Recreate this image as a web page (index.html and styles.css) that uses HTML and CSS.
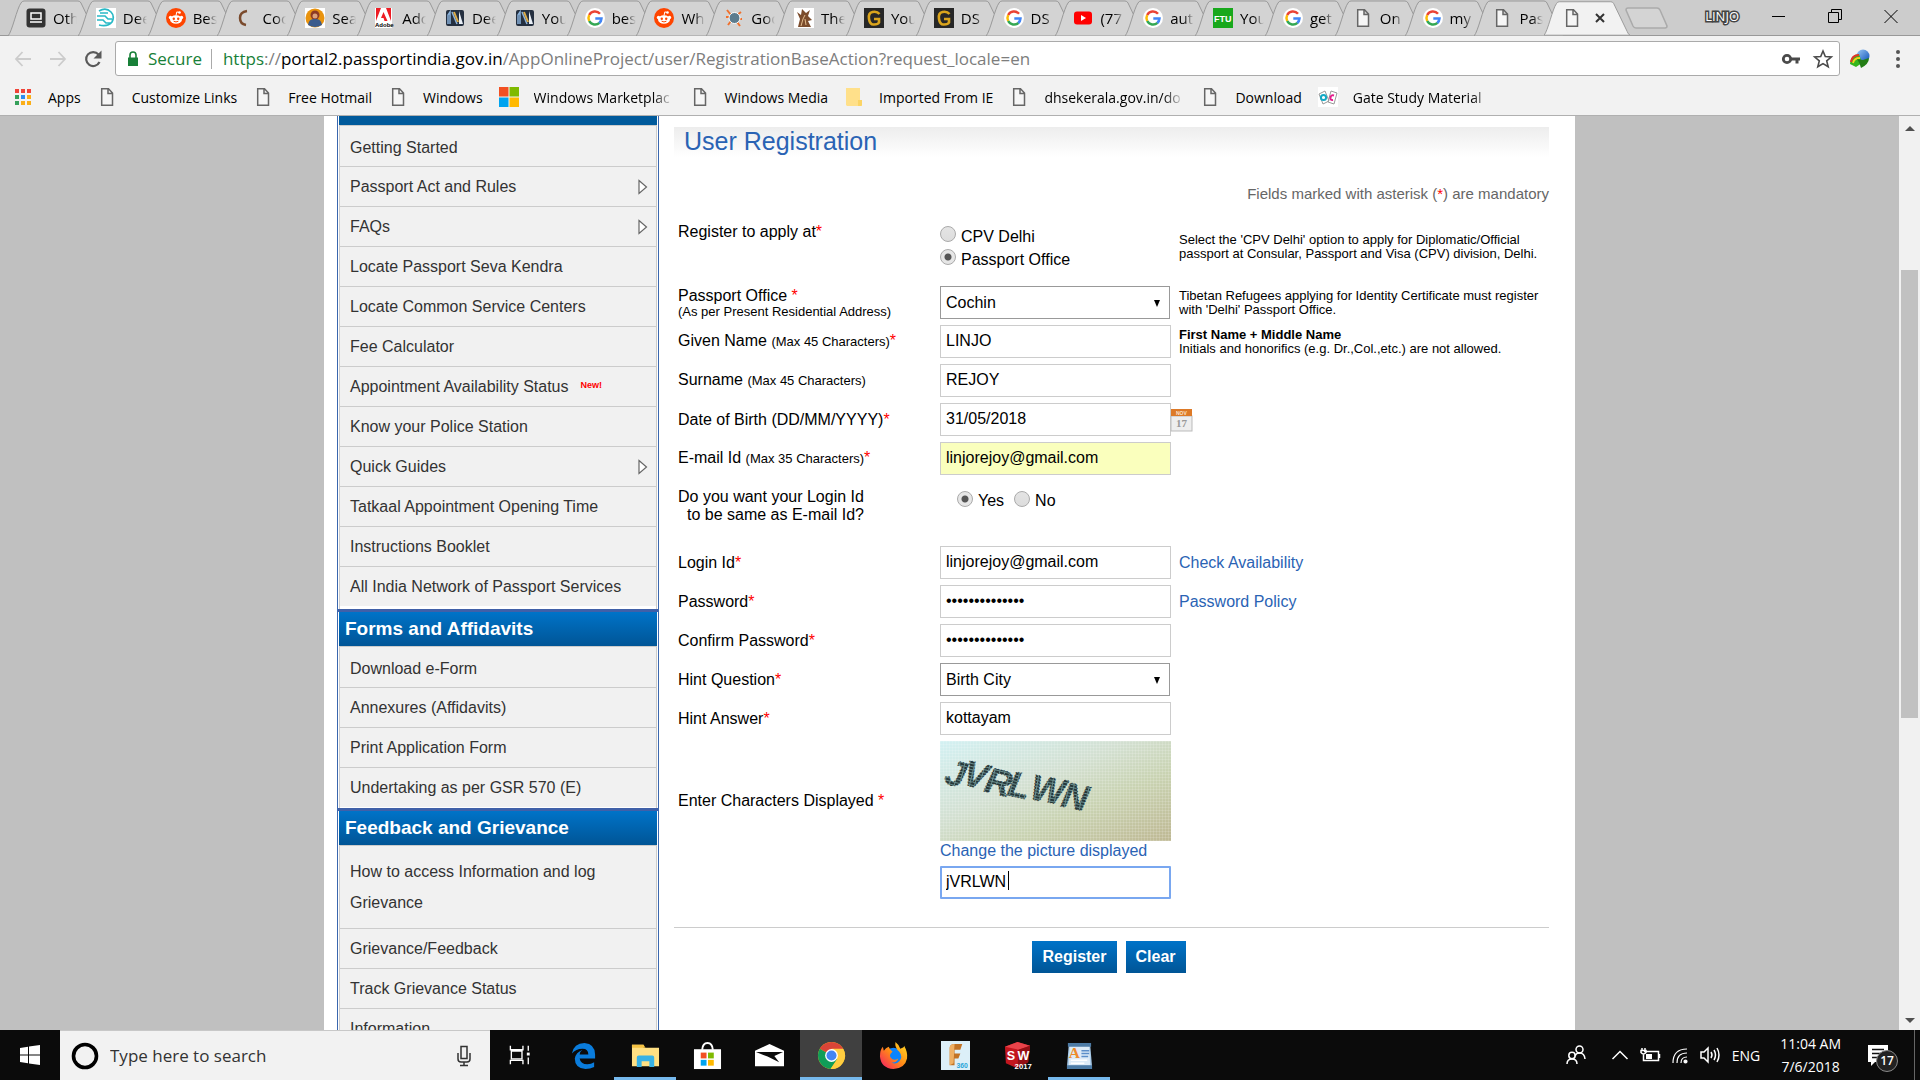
FILE: index.html
```html
<!DOCTYPE html>
<html lang="en">
<head>
<meta charset="utf-8">
<title>User Registration</title>
<link rel="stylesheet" href="styles.css">
</head>
<body>
<svg class="defs" aria-hidden="true">
  <defs>
    <linearGradient id="blueglow" x1="0" y1="0" x2="1" y2="1"><stop offset="0" stop-color="#9cc9f5"/><stop offset="1" stop-color="#0b4fb8"/></linearGradient>
    <linearGradient id="fire" x1="1" y1="0" x2="0" y2="1"><stop offset="0" stop-color="#ffe226"/><stop offset=".5" stop-color="#ff8a16"/><stop offset="1" stop-color="#f5156c"/></linearGradient>
    <linearGradient id="paper" x1="0" y1="0" x2="1" y2="1"><stop offset="0" stop-color="#d3f1f3"/><stop offset=".4" stop-color="#d3e0d2"/><stop offset=".65" stop-color="#c9d3b2"/><stop offset="1" stop-color="#beb893"/></linearGradient>
    <pattern id="weave" width="3" height="3" patternUnits="userSpaceOnUse"><path d="M0 0h3M0 0v3" stroke="#fff" stroke-opacity=".28" fill="none"/></pattern>
    <pattern id="hatch" width="5" height="3" patternUnits="userSpaceOnUse"><rect width="5" height="3" fill="#6a8f8f"/><path d="M0 1h4" stroke="#152022" stroke-width="1.6"/></pattern>
    <symbol id="tab" viewBox="0 0 90 36"><path d="M0 36C4 32 9 8 13 3Q14 1 16 1H70Q72 1 73 3L87 32Q88 35 90 36Z"/></symbol>
    <symbol id="google" viewBox="0 0 20 20"><circle cx="10" cy="10" r="10" fill="#fff"/><path d="M15 5.8A6.6 6.6 0 0 0 4.2 7" fill="none" stroke="#ea4335" stroke-width="2.5"/><path d="M4.2 7a6.6 6.6 0 0 0 0 6" fill="none" stroke="#fbbc05" stroke-width="2.5"/><path d="M4.2 13a6.6 6.6 0 0 0 10.3 1.8" fill="none" stroke="#34a853" stroke-width="2.5"/><path d="M14.3 15a6.600 6.600 0 0 0 2.200-4.600H10.300" fill="none" stroke="#4285f4" stroke-width="2.500"/></symbol>
    <symbol id="reddit" viewBox="0 0 20 20"><circle cx="10" cy="10" r="10" fill="#ff4500"/><ellipse cx="10" cy="11.500" rx="6" ry="4.300" fill="#fff"/><circle cx="4.500" cy="9.500" r="1.700" fill="#fff"/><circle cx="15.500" cy="9.500" r="1.700" fill="#fff"/><circle cx="13.500" cy="4.500" r="1.300" fill="#fff"/><path d="M10 7.500l.8-3.600 2.500.6M7.600 13.500q2.400 1.500 4.800 0" fill="none" stroke="#fff"/><circle cx="7.800" cy="10.800" r="1.200" fill="#ff4500"/><circle cx="12.200" cy="10.800" r="1.200" fill="#ff4500"/><path d="M7.600 13.200q2.400 1.500 4.800 0" fill="none" stroke="#ff4500"/></symbol>
    <symbol id="page" viewBox="0 0 20 20"><path d="M4.700 1.800h6.800l4 4.200v12.200H4.700zM11 2v4.500h4.500" fill="#f6f6f6" stroke="#666" stroke-width="1.500"/></symbol>
    <symbol id="laptop" viewBox="0 0 20 20"><rect x=".5" y=".5" width="19" height="19" rx="3" fill="#333"/><path d="M5 5h10v6H5zM4 14h12" fill="none" stroke="#fff" stroke-width="1.500"/></symbol>
    <symbol id="circuit" viewBox="0 0 20 20"><rect width="20" height="20" fill="#fff"/><path d="M3 3q7-4 12 1 4 4 1 10-4 5-13 3M1 8h8l3 3h4M1 12h6l3 3h5M4 5h8" fill="none" stroke="#28b9c6" stroke-width="1.700"/></symbol>
    <symbol id="arc" viewBox="0 0 20 20"><path d="M12 3Q5 4 5 10t6 7" fill="none" stroke="#7a4a2c" stroke-width="2.500"/></symbol>
    <symbol id="person" viewBox="0 0 20 20"><rect width="20" height="20" fill="#fff"/><circle cx="10" cy="10" r="9.500" fill="#e9930d"/><circle cx="10" cy="7" r="4.500" fill="#8d3a24"/><path d="M3 17q1-7 7-6 6-1 7 6-7 4-14 0z" fill="#3b5b8c"/><circle cx="10" cy="8" r="2.500" fill="#dca27c"/></symbol>
    <symbol id="adobe" viewBox="0 0 20 20"><rect width="17" height="20" fill="#fff"/><path d="M1 0h5L1 13zM11 0h5v13zM8.500 4l4 9h-3l-1-3H6z" fill="#ed1c24"/><text x="0" y="19" class="t-adobe">Adobe</text></symbol>
    <symbol id="blades" viewBox="0 0 20 20"><rect x="1" y="2" width="18" height="16" rx="2" fill="#253040"/><path d="M3 16V7l2-3v12M7 4l5 12" stroke="#8bb2db" stroke-width="1.500" fill="none"/><path d="M9 4l4 10" stroke="#e0ae48" stroke-width="2"/><path d="M14 3v13l4 0z" fill="#e8eef5"/></symbol>
    <symbol id="crab" viewBox="0 0 20 20"><path d="M3 2l4 5M17 4l-4 3M2 9h4M18 11h-4M4 17l3-4M16 18l-3-4" stroke="#f0702c" stroke-width="2"/><circle cx="10.500" cy="10" r="5.500" fill="#5c7c8e" stroke="#fff"/></symbol>
    <symbol id="statue" viewBox="0 0 20 20"><rect width="20" height="20" fill="#fff"/><path d="M4 19l2-8-3-7 4 3 1-6 4 4 4-3-2 6 4 4-4 1 3 6z" fill="#7b4c2c"/><path d="M7 18l2-7 2-4M12 17l-1-6" stroke="#e3bd8d" fill="none"/></symbol>
    <symbol id="goldg" viewBox="0 0 20 20"><rect width="20" height="20" fill="#272727"/><path d="M15.500 6Q13 3 8.500 4T5 11t5 5.500q4 0 5-2V11h-5" fill="none" stroke="#dba51c" stroke-width="2.600"/></symbol>
    <symbol id="youtube" viewBox="0 0 20 20"><rect x="1" y="3.500" width="18" height="13" rx="3" fill="#f00"/><path d="M8 7l5 3-5 3z" fill="#fff"/></symbol>
    <symbol id="ftu" viewBox="0 0 20 20"><rect width="20" height="20" fill="#18a81c"/><text x="1" y="14" class="t-ftu">FTU</text></symbol>
    <symbol id="winlogo" viewBox="0 0 20 20"><path d="M0 0h9.500v9.500H0z" fill="#f25022"/><path d="M10.500 0H20v9.500h-9.500z" fill="#7fba00"/><path d="M0 10.500h9.500V20H0z" fill="#00a4ef"/><path d="M10.500 10.500H20V20h-9.500z" fill="#ffb900"/></symbol>
    <symbol id="folder" viewBox="0 0 20 20"><path d="M2 1h14v12l2 1v5H3l-1-1z" fill="#ffe08a"/><path d="M14 13h4v5l-1 1h-3z" fill="#fbd465"/></symbol>
    <symbol id="apps" viewBox="0 0 20 20"><path d="M2 2h4v4H2zM8 2h4v4H8zM14 2h4v4h-4z" fill="#f04438"/><path d="M2 8h4v4H2zM2 14h4v4H2z" fill="#35a05a"/><path d="M8 8h4v4H8z" fill="#2d8cf0"/><path d="M14 8h4v4h-4zM8 14h4v4H8zM14 14h4v4h-4z" fill="#fbae17"/></symbol>
    <symbol id="gate" viewBox="0 0 20 20"><rect width="20" height="20" fill="#fff"/><path d="M1 7l6-3 4 10-6 3zM13 4l6 2-3 11-6-2z" fill="#fff" stroke="#999"/><circle cx="5.500" cy="10.500" r="2.600" fill="none" stroke="#15a9c4" stroke-width="2"/><path d="M16 8.500q-3-1-3.500 2t2.500 2.500" fill="none" stroke="#e41b8b" stroke-width="2"/></symbol>
    <symbol id="tri" viewBox="0 0 10 16"><path d="M1 1.500l7.500 6.500L1 14.500z" fill="#fff" stroke="#666" stroke-width="1.200"/></symbol>
  </defs>
</svg>

<header class="browser">
  <div class="strip">
    <div class="tabs" role="tablist">
      <button class="tab" role="tab"><svg class="shape"><use href="#tab"/></svg><svg class="ico"><use href="#laptop"/></svg><span>Oth</span></button>
      <button class="tab" role="tab"><svg class="shape"><use href="#tab"/></svg><svg class="ico"><use href="#circuit"/></svg><span>Dee</span></button>
      <button class="tab" role="tab"><svg class="shape"><use href="#tab"/></svg><svg class="ico"><use href="#reddit"/></svg><span>Bes</span></button>
      <button class="tab" role="tab"><svg class="shape"><use href="#tab"/></svg><svg class="ico"><use href="#arc"/></svg><span>Coc</span></button>
      <button class="tab" role="tab"><svg class="shape"><use href="#tab"/></svg><svg class="ico"><use href="#person"/></svg><span>Sea</span></button>
      <button class="tab" role="tab"><svg class="shape"><use href="#tab"/></svg><svg class="ico"><use href="#adobe"/></svg><span>Adc</span></button>
      <button class="tab" role="tab"><svg class="shape"><use href="#tab"/></svg><svg class="ico"><use href="#blades"/></svg><span>Dee</span></button>
      <button class="tab" role="tab"><svg class="shape"><use href="#tab"/></svg><svg class="ico"><use href="#blades"/></svg><span>You</span></button>
      <button class="tab" role="tab"><svg class="shape"><use href="#tab"/></svg><svg class="ico"><use href="#google"/></svg><span>bes</span></button>
      <button class="tab" role="tab"><svg class="shape"><use href="#tab"/></svg><svg class="ico"><use href="#reddit"/></svg><span>Wh</span></button>
      <button class="tab" role="tab"><svg class="shape"><use href="#tab"/></svg><svg class="ico"><use href="#crab"/></svg><span>Goo</span></button>
      <button class="tab" role="tab"><svg class="shape"><use href="#tab"/></svg><svg class="ico"><use href="#statue"/></svg><span>The</span></button>
      <button class="tab" role="tab"><svg class="shape"><use href="#tab"/></svg><svg class="ico"><use href="#goldg"/></svg><span>You</span></button>
      <button class="tab" role="tab"><svg class="shape"><use href="#tab"/></svg><svg class="ico"><use href="#goldg"/></svg><span>DS</span></button>
      <button class="tab" role="tab"><svg class="shape"><use href="#tab"/></svg><svg class="ico"><use href="#google"/></svg><span>DS</span></button>
      <button class="tab" role="tab"><svg class="shape"><use href="#tab"/></svg><svg class="ico"><use href="#youtube"/></svg><span>(77</span></button>
      <button class="tab" role="tab"><svg class="shape"><use href="#tab"/></svg><svg class="ico"><use href="#google"/></svg><span>aut</span></button>
      <button class="tab" role="tab"><svg class="shape"><use href="#tab"/></svg><svg class="ico"><use href="#ftu"/></svg><span>You</span></button>
      <button class="tab" role="tab"><svg class="shape"><use href="#tab"/></svg><svg class="ico"><use href="#google"/></svg><span>get</span></button>
      <button class="tab" role="tab"><svg class="shape"><use href="#tab"/></svg><svg class="ico"><use href="#page"/></svg><span>On</span></button>
      <button class="tab" role="tab"><svg class="shape"><use href="#tab"/></svg><svg class="ico"><use href="#google"/></svg><span>my</span></button>
      <button class="tab" role="tab"><svg class="shape"><use href="#tab"/></svg><svg class="ico"><use href="#page"/></svg><span>Pas</span></button>
      <button class="tab active" role="tab" aria-selected="true" aria-label="Current tab"><svg class="shape"><use href="#tab"/></svg><svg class="ico"><use href="#page"/></svg><svg class="close" viewBox="0 0 12 12"><path d="M2 2l8 8M10 2l-8 8" stroke="#333" stroke-width="2"/></svg></button>
    </div>
    <button class="newtab" aria-label="New tab"><svg viewBox="0 0 44 22"><path d="M3 1h29q2 0 3 2l7 16q0 2-2 2H11q-2 0-3-2L1 3q0-2 2-2z" fill="#d4d4d4" stroke="#aaa" stroke-width="1.500"/></svg></button>
    <div class="win">
      <span class="user">LINJO</span>
      <button aria-label="Minimise"><svg viewBox="0 0 16 16"><path d="M1 8.500h13" stroke="#000"/></svg></button>
      <button aria-label="Restore"><svg viewBox="0 0 16 16"><path d="M1.500 4.500h10v10h-10zM4.500 4.500v-3h10v10h-3" fill="none" stroke="#000"/></svg></button>
      <button aria-label="Close"><svg viewBox="0 0 16 16"><path d="M1.500 2l13 13M14.500 2l-13 13" stroke="#000"/></svg></button>
    </div>
  </div>
  <div class="toolbar">
    <button class="nav" aria-label="Back"><svg viewBox="0 0 20 20"><path d="M18 10H3M9.500 3L3 10l6.500 7" fill="none" stroke="#ccc" stroke-width="1.800"/></svg></button>
    <button class="nav" aria-label="Forward"><svg viewBox="0 0 20 20"><path d="M2 10h15M10.500 3l6.500 7-6.500 7" fill="none" stroke="#ccc" stroke-width="1.800"/></svg></button>
    <button class="nav" aria-label="Reload"><svg viewBox="0 0 20 20"><path d="M16.500 13A7 7 0 1 1 15.500 5.500" fill="none" stroke="#5a5a5a" stroke-width="2.200"/><path d="M18.500 1.500v8h-8z" fill="#5a5a5a"/></svg></button>
    <div class="omnibox">
      <svg class="lock" viewBox="0 0 12 16"><path d="M1 6.500h10V15H1z" fill="#188038"/><path d="M3 7V4a3 3 0 0 1 6 0v3" fill="none" stroke="#188038" stroke-width="1.600"/></svg>
      <span class="secure">Secure</span>
      <span class="url"><i>https</i>://<b>portal2.passportindia.gov.in</b>/AppOnlineProject/user/RegistrationBaseAction?request_locale=en</span>
      <svg class="key" viewBox="0 0 20 20"><circle cx="6" cy="10" r="3.700" fill="none" stroke="#4a4a4a" stroke-width="2.800"/><path d="M9 8.500h10v3h-1.500v3h-3v-3H9z" fill="#4a4a4a"/></svg>
      <svg class="key" viewBox="0 0 20 20"><path d="M10 2l2.300 5.600 6 .4-4.600 3.900 1.500 5.900L10 14.600l-5.200 3.200 1.500-5.900L1.700 8l6-.4z" fill="none" stroke="#4a4a4a" stroke-width="1.600"/></svg>
    </div>
    <svg class="ext" viewBox="0 0 20 20"><circle cx="13" cy="7" r="6.500" fill="url(#blueglow)"/><path d="M0 15Q0 6 9 5l3 9-6 4z" fill="#35b51d"/><path d="M1 13q1-7 8-7" stroke="#e2342b" stroke-width="2" fill="none"/><path d="M3 14q1-5 7-5" stroke="#f4d21c" stroke-width="1.800" fill="none"/><path d="M7 10l6 1 6-2q0 6-8 10-1-5-4-9z" fill="#237d15"/></svg>
    <svg class="dots" viewBox="0 0 20 20"><circle cx="10" cy="3" r="2" fill="#555"/><circle cx="10" cy="10" r="2" fill="#555"/><circle cx="10" cy="17" r="2" fill="#555"/></svg>
  </div>
  <nav class="bookmarks">
    <a href="#"><svg class="ico"><use href="#apps"/></svg><span>Apps</span></a>
    <a href="#"><svg class="ico"><use href="#page"/></svg><span>Customize Links</span></a>
    <a href="#"><svg class="ico"><use href="#page"/></svg><span>Free Hotmail</span></a>
    <a href="#"><svg class="ico"><use href="#page"/></svg><span>Windows</span></a>
    <a href="#"><svg class="ico"><use href="#winlogo"/></svg><span class="fade">Windows Marketplac</span></a>
    <a href="#"><svg class="ico"><use href="#page"/></svg><span>Windows Media</span></a>
    <a href="#"><svg class="ico"><use href="#folder"/></svg><span>Imported From IE</span></a>
    <a href="#"><svg class="ico"><use href="#page"/></svg><span class="fade">dhsekerala.gov.in/do</span></a>
    <a href="#"><svg class="ico"><use href="#page"/></svg><span>Download</span></a>
    <a href="#"><svg class="ico"><use href="#gate"/></svg><span class="fade">Gate Study Material</span></a>
  </nav>
</header>

<div class="viewport">
  <div class="scroller">
    <div class="sheet">
      <aside class="side">
        <section>
          <div class="sidehead cut"></div>
          <ul>
            <li><a href="#">Getting Started</a></li>
            <li><a href="#">Passport Act and Rules<svg class="tri"><use href="#tri"/></svg></a></li>
            <li><a href="#">FAQs<svg class="tri"><use href="#tri"/></svg></a></li>
            <li><a href="#">Locate Passport Seva Kendra</a></li>
            <li><a href="#">Locate Common Service Centers</a></li>
            <li><a href="#">Fee Calculator</a></li>
            <li><a href="#">Appointment Availability Status <sup>New!</sup></a></li>
            <li><a href="#">Know your Police Station</a></li>
            <li><a href="#">Quick Guides<svg class="tri"><use href="#tri"/></svg></a></li>
            <li><a href="#">Tatkaal Appointment Opening Time</a></li>
            <li><a href="#">Instructions Booklet</a></li>
            <li><a href="#">All India Network of Passport Services</a></li>
          </ul>
        </section>
        <section>
          <h2 class="sidehead">Forms and Affidavits</h2>
          <ul>
            <li><a href="#">Download e-Form</a></li>
            <li><a href="#">Annexures (Affidavits)</a></li>
            <li><a href="#">Print Application Form</a></li>
            <li><a href="#">Undertaking as per GSR 570 (E)</a></li>
          </ul>
        </section>
        <section>
          <h2 class="sidehead">Feedback and Grievance</h2>
          <ul>
            <li class="tall"><a href="#">How to access Information and log Grievance</a></li>
            <li><a href="#">Grievance/Feedback</a></li>
            <li><a href="#">Track Grievance Status</a></li>
            <li><a href="#">Information</a></li>
          </ul>
        </section>
      </aside>
      <main class="main">
        <h1>User Registration</h1>
        <p class="mandatory">Fields marked with asterisk (<em>*</em>) are mandatory</p>
        <form>
          <div class="row apply" role="radiogroup" aria-labelledby="apply-label">
            <div class="label" id="apply-label">Register to apply at<em>*</em></div>
            <div class="radios stack">
              <label><input type="radio" name="apply">CPV Delhi</label>
              <label><input type="radio" name="apply" checked>Passport Office</label>
            </div>
            <p class="help">Select the 'CPV Delhi' option to apply for Diplomatic/Official<br>passport at Consular, Passport and Visa (CPV) division, Delhi.</p>
          </div>
          <div class="row">
            <label for="office">Passport Office <em>*</em><small class="under">(As per Present Residential Address)</small></label>
            <select id="office"><option>Cochin</option></select>
            <p class="help">Tibetan Refugees applying for Identity Certificate must register<br>with 'Delhi' Passport Office.</p>
          </div>
          <div class="row">
            <label for="given">Given Name <small>(Max 45 Characters)</small><em>*</em></label>
            <input id="given" type="text" value="LINJO">
            <p class="help"><strong>First Name + Middle Name</strong><br>Initials and honorifics (e.g. Dr.,Col.,etc.) are not allowed.</p>
          </div>
          <div class="row">
            <label for="surname">Surname <small>(Max 45 Characters)</small></label>
            <input id="surname" type="text" value="REJOY">
          </div>
          <div class="row">
            <label for="dob">Date of Birth (DD/MM/YYYY)<em>*</em></label>
            <input id="dob" type="text" value="31/05/2018">
            <button type="button" class="cal" aria-label="Choose date"><svg viewBox="0 0 21 23"><rect y="7" width="21" height="15" fill="#eee" stroke="#bbb"/><rect width="21" height="7" fill="#dd7a28"/><text x="5" y="6" class="t-nov">NOV</text><text x="5" y="18" class="t-day">17</text></svg></button>
          </div>
          <div class="row">
            <label for="email">E-mail Id <small>(Max 35 Characters)</small><em>*</em></label>
            <input id="email" class="filled" type="text" value="linjorejoy@gmail.com">
          </div>
          <div class="row same" role="radiogroup" aria-labelledby="same-label">
            <div class="label" id="same-label">Do you want your Login Id<br><span class="indent">to be same as E-mail Id?</span></div>
            <div class="radios inline">
              <label><input type="radio" name="same" checked>Yes</label>
              <label><input type="radio" name="same">No</label>
            </div>
          </div>
          <div class="row">
            <label for="login">Login Id<em>*</em></label>
            <input id="login" type="text" value="linjorejoy@gmail.com">
            <a class="link" href="#">Check Availability</a>
          </div>
          <div class="row">
            <label for="pass">Password<em>*</em></label>
            <input id="pass" type="password" value="aaaaaaaaaaaaaa">
            <a class="link" href="#">Password Policy</a>
          </div>
          <div class="row">
            <label for="pass2">Confirm Password<em>*</em></label>
            <input id="pass2" type="password" value="aaaaaaaaaaaaaa">
          </div>
          <div class="row">
            <label for="hint">Hint Question<em>*</em></label>
            <select id="hint"><option>Birth City</option></select>
          </div>
          <div class="row">
            <label for="answer">Hint Answer<em>*</em></label>
            <input id="answer" type="text" value="kottayam">
          </div>
          <div class="row captcha">
            <label for="code">Enter Characters Displayed <em>*</em></label>
            <div class="code">
              <svg class="picture" viewBox="0 0 231 100" role="img" aria-label="Captcha">
                <rect width="231" height="100" fill="url(#paper)"/>
                <rect width="231" height="100" fill="url(#weave)"/>
                <g class="glyphs">
                  <text x="3" y="42" transform="rotate(14 3 42)">J</text>
                  <text x="21" y="43" transform="rotate(14 21 43)">V</text>
                  <text x="43" y="50" transform="rotate(14 43 50)">R</text>
                  <text x="66" y="54" transform="rotate(12 66 54)">L</text>
                  <text x="89" y="58" transform="rotate(10 89 58)">W</text>
                  <text x="120" y="65" transform="rotate(12 120 65)">N</text>
                </g>
              </svg>
              <a class="link" href="#">Change the picture displayed</a>
              <input id="code" class="current" type="text" value="jVRLWN">
              <span class="caret"></span>
            </div>
          </div>
          <div class="actions">
            <button type="button">Register</button>
            <button type="button">Clear</button>
          </div>
        </form>
      </main>
    </div>
  </div>
  <div class="bar"><i class="up"></i><i class="thumb"></i><i class="down"></i></div>
</div>

<footer class="taskbar">
  <button class="start" aria-label="Start"><svg viewBox="0 0 20 20"><path d="M0 3l8-1.200v7.700H0zM9 1.600L20 0v9.500H9zM0 10.500h8v7.700L0 17zM9 10.500h11V20L9 18.400z" fill="#fff"/></svg></button>
  <label class="search">
    <svg class="ring" viewBox="0 0 28 28"><circle cx="14" cy="14" r="11.500" fill="none" stroke="#000" stroke-width="3.600"/></svg>
    <input type="text" placeholder="Type here to search" aria-label="Type here to search">
    <svg class="mic" viewBox="0 0 16 22"><path d="M5 1.500h6v12H5zM2 8v6q0 3 3 3h6q3 0 3-3V8M8 17v4M4 20.500h8" fill="none" stroke="#333" stroke-width="1.500"/></svg>
  </label>
  <div class="apps">
    <button aria-label="Task view"><svg viewBox="0 0 30 30"><path d="M3.500 5v4h13V5M3.500 24v-4h13v4M4.500 10.500h11v8h-11zM22 5v5M22 17v7" fill="none" stroke="#fff" stroke-width="1.400"/><path d="M20.500 12h3v3h-3z" fill="#fff"/></svg></button>
    <button aria-label="Edge"><svg viewBox="0 0 30 30"><path d="M3 13Q5 2 16 2q11 1 11 12v4H11q1 6 8 6 4 0 7-2v5q-4 2-9 2Q6 28 6 18q1-6 8-9-3 2-3 5h9q0-6-6-6Q7 8 3 13z" fill="#0a7cdc"/></svg></button>
    <button class="run" aria-label="File Explorer"><svg viewBox="0 0 30 30"><path d="M1 4h12v3h16v19H1z" fill="#ffe083"/><path d="M1 4h12l2 3H1z" fill="#f5c242"/><path d="M6 27V17q0-2 2-2h14q2 0 2 2v10h-5v-6h-8v6z" fill="#38b2e5"/></svg></button>
    <button aria-label="Store"><svg viewBox="0 0 30 30"><path d="M9.500 9Q10 2 15 2t5.500 7" fill="none" stroke="#fff" stroke-width="2"/><path d="M1 8.500h28V29H1z" fill="#fff"/><path d="M8 12h6v6H8z" fill="#f25022"/><path d="M15.500 12h6v6h-6z" fill="#7fba00"/><path d="M8 19.500h6v6H8z" fill="#00a4ef"/><path d="M15.500 19.500h6v6h-6z" fill="#ffb900"/></svg></button>
    <button aria-label="Mail"><svg viewBox="0 0 30 30"><path d="M0 10L15 3l15 7v16H0z" fill="#fff"/><path d="M1 11.500h28l-9 4 5 6.500-12-6z" fill="#0b0b0b"/></svg></button>
    <button class="run on" aria-label="Chrome"><svg viewBox="0 0 30 30"><circle cx="15" cy="15" r="14" fill="#fbc116"/><path d="M15 15L2.900 8A14 14 0 0 1 27.100 8z" fill="#db4437"/><path d="M15 15L2.900 8A14 14 0 0 0 14 29l7-10.500z" fill="#109d58"/><path d="M14 29a14 14 0 0 0 13.100-21H15l6 10.500z" fill="#ffcd40"/><circle cx="15" cy="15" r="6.600" fill="#fff"/><circle cx="15" cy="15" r="5.200" fill="#4285f4"/></svg></button>
    <button aria-label="Firefox"><svg viewBox="0 0 30 30"><circle cx="15" cy="17" r="10" fill="#0a84ff"/><path d="M17 1q4 3 5 7 4-1 4-3 4 7 3 13-2 10-14 11Q2 28 1 16q0-7 3-10l1 4q2-3 5-4 1 3 4 5-4 3-2 6 3 4 8 1-2 5-7 4 4 3 8-1 4-5 0-10-5-4-4-10z" fill="url(#fire)"/></svg></button>
    <button aria-label="Fusion 360"><svg viewBox="0 0 30 30"><rect width="30" height="30" fill="#dceff8"/><path d="M9 25V7q0-4 5-4h8l-2 6h-6v4h6l-2 5h-4v7z" fill="#c27325"/><path d="M9 7q0-4 5-4l-1 20-4 2z" fill="#efaf63"/><text x="16" y="28" class="t-360">360</text></svg></button>
    <button aria-label="SolidWorks"><svg viewBox="0 0 30 30"><path d="M2 6l13-5 13 4-2 17-12 6L3 23z" fill="#c3161e"/><path d="M2 6l13-5 13 4-12 4z" fill="#e9434a"/><path d="M16 9l12-4-2 17-11 6z" fill="#930e14"/><text x="4" y="20" class="t-sw">S</text><text x="15" y="20" class="t-sw">W</text><text x="12" y="29" class="t-year">2017</text></svg></button>
    <button class="run" aria-label="WordPad"><svg viewBox="0 0 30 30"><path d="M4 3h22l2 24H2z" fill="#a9cbe9"/><path d="M5 5h20l1 20H4z" fill="#ddebf7"/><path d="M3 2h24v4H3zM2 25h26v4H2z" fill="#4d7ba5"/><text x="4" y="18" class="t-a">A</text><path d="M17 10h8M17 13h8M17 16h7" stroke="#5b8ec9" stroke-width="1.500"/><path d="M6 20h17M6 23h14" stroke="#fff" stroke-width="1.500"/></svg></button>
  </div>
  <div class="tray">
    <svg class="w20" viewBox="0 0 20 20"><circle cx="13.500" cy="4.500" r="3.500"/><circle cx="6" cy="10.500" r="3.200"/><path d="M1 19q0-5 5-5t5 5M9 11q1-3 4.500-3 5 0 5.500 6"/></svg>
    <svg class="chev" viewBox="0 0 20 20"><path d="M2.500 14L10 6.500l7.500 7.500"/></svg>
    <svg class="w20" viewBox="0 0 20 20"><path d="M4 6.500h14.500v9H3.500v-5M19.500 9v4M2 3v2M5 3v2M1 5.500h5v2q-2.500 3-5 0zM3.500 9v2"/><path d="M6 9h6v5H6z" fill="#fff" stroke="none"/></svg>
    <svg class="w20 wifi" viewBox="0 0 20 20"><path d="M3 18Q3 4 17 4M7 18Q7 8 17 8M11 18q0-6 6-6"/><circle cx="15.500" cy="16.500" r="1.500" fill="#fff"/></svg>
    <svg class="w20" viewBox="0 0 20 20"><path d="M1 7h3l4-4v14l-4-4H1zM11 7q2 3 0 6M14 5q3 5 0 10M17 3q4 7 0 14"/></svg>
    <span class="lang">ENG</span>
    <time class="clock">11:04 AM<br>7/6/2018</time>
    <span class="note"><svg viewBox="0 0 20 20"><path d="M0 1h20v17H7l-4 4V18H0z" fill="#fff" stroke="none"/><path d="M4 5.500h12M4 9.500h12M4 13.500h8" stroke="#111"/></svg><b>17</b></span>
    <span class="peek"></span>
  </div>
</footer>
</body>
</html>
```
FILE: styles.css
```css
* { box-sizing: border-box; }
html, body { height: 100%; }
body {
  margin: 0;
  display: flex;
  flex-direction: column;
  overflow: hidden;
  font-family: "Liberation Sans", Arial, sans-serif;
  font-size: 16px;
  color: #000;
}
button { font: inherit; border: 0; background: none; padding: 0; margin: 0; }
a { text-decoration: none; color: inherit; }
svg { display: block; flex: none; overflow: visible; }
em { font-style: normal; color: #f00; }
.defs { position: absolute; width: 0; height: 0; }
.ico { width: 20px; height: 20px; }

/* browser frame */
.browser { flex: none; background: #f2f2f2; border-bottom: 1px solid #b0b0b0; font-family: "Open Sans", "Noto Sans", sans-serif; }
.strip { display: flex; height: 36px; background: #ccc; border-bottom: 1px solid #999; }
.tabs { display: flex; flex: 0 1 1614px; padding-left: 8px; height: 36px; }
.tab { position: relative; display: flex; align-items: center; flex: 1 1 0; min-width: 0; padding-left: 18px; gap: 7px; font-size: 15px; text-align: left; }
.tab .shape { position: absolute; left: 0; top: 0; width: 90px; height: 36px; fill: #d3d3d3; stroke: #999; pointer-events: none; }
.tab .ico, .tab span, .tab .close { position: relative; }
.tab span { width: 24px; overflow: hidden; white-space: nowrap; -webkit-mask-image: linear-gradient(90deg, #000 55%, transparent); mask-image: linear-gradient(90deg, #000 55%, transparent); }
.tab.active .shape { fill: #f2f2f2; width: 86px; }
.tab .close { width: 12px; height: 12px; margin-left: 5px; }
.newtab { margin-left: 11px; }
.newtab svg { width: 44px; height: 22px; }
.win { display: flex; align-items: center; margin-left: auto; height: 32px; padding-right: 21px; gap: 40px; }
.win svg { width: 16px; height: 16px; }
.user { font-size: 13px; color: #fff; -webkit-text-stroke: 3px #444; paint-order: stroke fill; margin-right: -8px; }

.toolbar { display: flex; align-items: center; height: 45px; padding: 0 12px 0 13px; }
.nav { width: 20px; margin-right: 15px; }
.nav:nth-child(3) { margin-right: 12px; }
.nav svg { width: 20px; height: 20px; }
.omnibox { flex: 1; min-width: 0; display: flex; align-items: center; height: 35px; background: #fff; border: 1px solid #aaa; border-radius: 3px; padding: 0 6px 0 11px; font-size: 17px; }
.lock { width: 12px; height: 16px; }
.secure { color: #188038; margin-left: 9px; padding-right: 9px; border-right: 1px solid #aaa; line-height: 20px; }
.url { flex: 1; margin-left: 11px; color: #7d7d7d; white-space: nowrap; }
.url i { font-style: normal; color: #188038; }
.url b { font-weight: 400; color: #000; }
.key { width: 20px; height: 20px; margin-left: 12px; }
.ext { width: 20px; height: 20px; margin: 0 18px 0 10px; }
.dots { width: 20px; height: 20px; }

.bookmarks { display: flex; align-items: center; gap: 16px; height: 34px; padding: 0 0 2px 13px; font-size: 14px; }
.bookmarks a { display: flex; align-items: center; gap: 15px; white-space: nowrap; }
.fade { width: 140px; overflow: hidden; -webkit-mask-image: linear-gradient(90deg, #000 85%, transparent); mask-image: linear-gradient(90deg, #000 85%, transparent); }

/* page area */
.viewport { flex: 1; min-height: 0; display: flex; background: #c0c0c0; }
.scroller { flex: 1; min-width: 0; overflow: hidden; display: flex; justify-content: center; }
.sheet { flex: 0 1 1251px; display: flex; align-items: flex-start; background: #fff; padding: 0 26px 0 13px; min-height: min-content; }
.bar { width: 21px; background: #f1f1f1; padding: 0 2px; display: flex; flex-direction: column; align-items: center; }
.up, .down { border: 5px solid transparent; margin: 4px 0; }
.up { border-bottom-color: #505050; margin-top: 5px; }
.down { border-top-color: #505050; margin: auto 0 2px; }
.thumb { width: 100%; height: 49%; margin-top: 135px; background: #c1c1c1; }

.side { flex: 0 0 322px; border: solid #3b67ae; border-width: 0 1px; padding: 0 1px; }
.side section + section { border-top: 3px solid #4060a8; margin: 0 -1px; padding: 0 1px; }
.sidehead { margin: 0; height: 34px; padding-left: 6px; font-size: 19px; line-height: 34px; color: #fff; background: linear-gradient(#0073c8, #005596); }
.sidehead.cut { height: 9px; background: #005a9c; }
.side ul { margin: 0; padding: 0; list-style: none; border: 1px solid #ccc; border-width: 1px 1px 0; }
.side section:first-child ul { padding-bottom: 2px; }
.side li { background: #f1f1f1; border-bottom: 1px solid #ccc; }
.side li:last-child { border-bottom-color: #fff; }
.side li a { display: flex; align-items: center; height: 39px; padding: 1px 8px 0 10px; color: #333; }
.side li:first-child a { height: 40px; padding-top: 3px; }
.side li.tall a { height: 82px; line-height: 31px; padding-top: 0; }
.side sup { color: #f00; font-size: 9px; font-weight: 700; margin: -4px 0 0 12px; }
.tri { width: 10px; height: 16px; margin-left: auto; }

.main { flex: 1; min-width: 0; padding: 11px 0 0 15px; }
h1 { margin: 0; height: 30px; padding-left: 10px; font-size: 25px; font-weight: 400; line-height: 28px; color: #2a63b4; background: linear-gradient(#ededed, #fff); }
.mandatory { margin: 27px 0 14px; text-align: right; color: #666; font-size: 15px; line-height: 20px; }
.row { display: grid; grid-template-columns: 262px 231px 1fr; align-items: center; min-height: 39px; padding-left: 4px; }
.row > label { line-height: 18px; }
small { font-size: 13px; }
.under { display: block; line-height: 14px; }
.row input[type="text"], .row input[type="password"], .row select {
  width: 100%; height: 33px; margin: 0; padding: 0 5px 2px; border: 1px solid #ccc; border-radius: 0;
  background: #fff; font: 16px "Liberation Sans", Arial, sans-serif; color: #000; outline: 0;
}
.row select {
  appearance: none; width: 230px; padding-bottom: 0; border-color: #999;
  background: #fff url("data:image/svg+xml,%3Csvg xmlns='http://www.w3.org/2000/svg' width='8' height='8'%3E%3Cpath d='M1 1h6L4 8z'/%3E%3C/svg%3E") no-repeat right 8px center;
}
.row input.filled { background: #faffbd; }
.row .help { margin: 0 0 0 8px; font-size: 13px; line-height: 14px; white-space: nowrap; }
.link { color: #2a63b4; }
.row > .link { margin-left: 8px; }
.apply { align-items: start; height: 65px; }
.apply .label { padding-top: 4px; line-height: 20px; }
.apply .help { padding-top: 15px; }
.radios label { display: flex; align-items: center; gap: 5px; }
.radios.stack { padding: 7px 0 0; }
.radios.stack label { height: 23px; }
.radios input { appearance: none; width: 16px; height: 16px; margin: -5px 0 0; border: 1px solid #aaa; border-radius: 50%; background: linear-gradient(#e4e4e4, #ddd); }
.radios input:checked { background: radial-gradient(circle, #555 0 3px, #e6e6e6 4px); }
.same { align-items: start; height: 65px; }
.same .label { padding-top: 10px; line-height: 18px; }
.indent { padding-left: 9px; }
.radios.inline { display: flex; gap: 10px; padding: 14px 0 0 17px; }
.cal { justify-self: start; margin-top: 2px; }
.cal svg { width: 21px; height: 23px; }
.captcha { height: 173px; align-items: start; padding-top: 3px; }
.captcha > label { padding-top: 51px; }
.code { position: relative; }
.picture { width: 231px; height: 100px; }
.code .link { display: block; line-height: 20px; margin-bottom: 5px; }
.row input.current { border: 2px solid #79a7f0; border-radius: 1px; padding-left: 4px; }
.caret { position: absolute; left: 68px; bottom: 9px; width: 1px; height: 19px; background: #000; }
.glyphs text { font: italic 700 36px "Liberation Sans", sans-serif; fill: url(#hatch); stroke: #26383a; stroke-width: 1; stroke-dasharray: 1 2; }
.actions { display: flex; justify-content: center; gap: 9px; border-top: 1px solid #ccc; margin-top: 16px; padding: 13px 5px 60px 0; }
.actions button { height: 32px; padding: 0 10px; font-weight: 700; color: #fff; background: linear-gradient(#0073c8, #005596); }

/* taskbar */
.taskbar { flex: none; display: flex; height: 50px; background: #0b0b0b; font-family: "Open Sans", "Noto Sans", sans-serif; color: #fff; }
.start { width: 60px; display: flex; justify-content: center; align-items: center; }
.start svg { width: 20px; height: 20px; }
.search { flex: 0 1 430px; display: flex; align-items: center; padding: 0 18px 0 11px; background: #f2f2f2; border-top: 1px solid #c8c8c8; }
.search input { flex: 1; min-width: 0; border: 0; background: none; padding: 0 0 0 11px; font: inherit; font-size: 17px; }
.search input::placeholder { color: #333; opacity: 1; }
.ring { width: 28px; height: 28px; }
.mic { width: 16px; height: 22px; }
.apps { display: flex; }
.apps button { display: flex; justify-content: center; align-items: center; width: 62px; height: 50px; border: solid transparent; border-width: 3px 0; }
.apps svg { width: 29px; height: 29px; }
.apps .run { border-bottom-color: #76b9ed; }
.apps .on { background: #404040; border-top-color: #404040; }
.tray { margin-left: auto; display: flex; align-items: center; }
.tray svg { fill: none; stroke: #fff; stroke-width: 1.5; }
.w20 { width: 20px; height: 20px; margin-right: 10px; }
.tray .wifi { stroke-width: 1.2; }
.chev { width: 20px; height: 20px; margin: 0 10px 0 14px; }
.lang { font-size: 14px; margin: 0 20px 0 2px; }
.clock { font-size: 14px; line-height: 23px; text-align: center; }
.note { position: relative; margin: 0 14px 0 27px; width: 32px; height: 32px; }
.note svg { width: 20px; height: 20px; margin-top: 5px; }
.note b { position: absolute; left: 8px; top: 11px; width: 22px; height: 22px; border: 1px solid #888; border-radius: 50%; background: #222; font-size: 12px; line-height: 20px; font-weight: 600; text-align: center; }
.peek { width: 6px; height: 50px; border-left: 1px solid #666; }

.t-adobe { font: 700 6px "Liberation Sans", sans-serif; }
.t-ftu { font: 700 9px "Liberation Sans", sans-serif; fill: #fff; }
.t-nov { font: 700 5px "Liberation Sans", sans-serif; fill: #fbe3cc; }
.t-day { font: 700 11px "Liberation Serif", serif; fill: #999; }
.t-360 { font: 700 7px "Liberation Sans", sans-serif; fill: #2aa5d8; stroke: none; }
.t-sw { font: 700 13px "Liberation Sans", sans-serif; fill: #fff; }
.t-year { font: 700 8px "Liberation Sans", sans-serif; fill: #fff; }
.t-a { font: 700 16px "Liberation Serif", serif; fill: #ee8b2c; }
```
